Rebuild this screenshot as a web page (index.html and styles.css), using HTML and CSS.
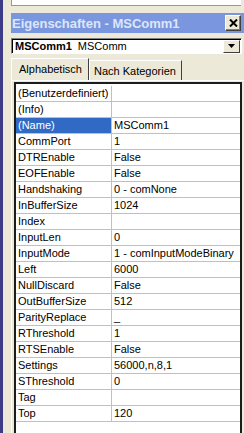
FILE: index.html
```html
<!DOCTYPE html>
<html lang="de">
<head>
    <meta charset="UTF-8">
    <meta name="viewport" content="width=device-width, initial-scale=1.0">
    <title>Eigenschaften - MSComm1</title>

    <link rel="stylesheet" href="styles.css">
</head>
<body>
    <div class="window">
        <div class="edge"></div>

        <div class="pane">
            <div class="top-box"></div>

            <div class="titlebar">
                <span class="title">Eigenschaften - MSComm1</span>
                <button type="button" class="close">
                    <svg width="9" height="8" viewBox="0 0 9 8">
                        <path d="M1 0.5 L8 7.5 M8 0.5 L1 7.5" stroke="#000" stroke-width="2" fill="none"/>
                    </svg>
                </button>
            </div>

            <div class="combo">
                <span class="combo-text"><b>MSComm1</b><span class="type">MSComm</span></span>
                <span class="combo-button">
                    <svg width="7" height="4" viewBox="0 0 7 4">
                        <path d="M0 0 H7 L3.5 4 Z" fill="#000"/>
                    </svg>
                </span>
            </div>

            <div class="tabs">
                <div class="tab active">Alphabetisch</div>
                <div class="tab">Nach Kategorien</div>
            </div>

            <div class="panel">
                <div class="grid">
                    <div class="row"><div class="name">(Benutzerdefiniert)</div><div class="value"></div></div>
                    <div class="row"><div class="name">(Info)</div><div class="value"></div></div>
                    <div class="row"><div class="name selected">(Name)</div><div class="value">MSComm1</div></div>
                    <div class="row"><div class="name">CommPort</div><div class="value">1</div></div>
                    <div class="row"><div class="name">DTREnable</div><div class="value">False</div></div>
                    <div class="row"><div class="name">EOFEnable</div><div class="value">False</div></div>
                    <div class="row"><div class="name">Handshaking</div><div class="value">0 - comNone</div></div>
                    <div class="row"><div class="name">InBufferSize</div><div class="value">1024</div></div>
                    <div class="row"><div class="name">Index</div><div class="value"></div></div>
                    <div class="row"><div class="name">InputLen</div><div class="value">0</div></div>
                    <div class="row"><div class="name">InputMode</div><div class="value">1 - comInputModeBinary</div></div>
                    <div class="row"><div class="name">Left</div><div class="value">6000</div></div>
                    <div class="row"><div class="name">NullDiscard</div><div class="value">False</div></div>
                    <div class="row"><div class="name">OutBufferSize</div><div class="value">512</div></div>
                    <div class="row"><div class="name">ParityReplace</div><div class="value">_</div></div>
                    <div class="row"><div class="name">RThreshold</div><div class="value">1</div></div>
                    <div class="row"><div class="name">RTSEnable</div><div class="value">False</div></div>
                    <div class="row"><div class="name">Settings</div><div class="value">56000,n,8,1</div></div>
                    <div class="row"><div class="name">SThreshold</div><div class="value">0</div></div>
                    <div class="row"><div class="name">Tag</div><div class="value"></div></div>
                    <div class="row"><div class="name">Top</div><div class="value">120</div></div>
                </div>
            </div>
        </div>
    </div>
</body>
</html>
```

FILE: styles.css
```css
body {
    margin: 0;

    font-family: 'Liberation Sans', Arial, sans-serif;
    font-size: 11px;
    color: #000;

    background-color: #ece9d8;

    overflow: hidden;
}

.window {
    height: 433px;

    display: flex;
}

.edge {
    width: 3px;

    background-color: #3b3b88;
}

.pane {
    flex: 1;
    min-width: 0;

    padding-left: 8px;

    display: flex;
    flex-direction: column;
}

.top-box {
    height: 5px;
    margin-right: 3px;
    margin-bottom: 7px;

    background-color: #fff;

    border-left: 1px solid #919b9c;
    border-bottom: 1px solid #919b9c;
}

.titlebar {
    height: 20px;

    background-color: #7a96df;

    display: flex;
    justify-content: space-between;
    align-items: center;
}

.titlebar .title {
    padding-left: 1px;

    color: #dce6fa;
    font-size: 13px;
    font-weight: bold;
}

.titlebar .close {
    width: 16px;
    height: 16px;
    margin-right: 3px;
    padding: 0;

    background-color: #ece9d8;

    border: 1px solid;
    border-color: #fff #404040 #404040 #fff;
    box-shadow: inset -1px -1px 0 #808080;

    display: flex;
    justify-content: center;
    align-items: center;
}

.combo {
    height: 12px;
    margin-top: 5px;
    margin-right: 2px;
    padding: 1px;

    background-color: #fff;

    border: 1px solid;
    border-color: #808080 #fff #fff #808080;
    box-shadow: inset 1px 1px 0 #000;

    display: flex;
    justify-content: space-between;
    align-items: center;
}

.combo .combo-text {
    padding-left: 2px;
}

.combo .type {
    margin-left: 6px;
}

.combo .combo-button {
    width: 17px;
    height: 13px;

    background-color: #ece9d8;

    border: 1px solid;
    border-color: #fff #404040 #404040 #fff;
    box-sizing: border-box;

    display: flex;
    justify-content: center;
    align-items: center;
}

.tabs {
    height: 22px;
    margin-top: 4px;

    display: flex;
    align-items: flex-end;
}

.tabs .tab {
    height: 19px;
    padding: 0 5px 0 4px;

    border: 1px solid;
    border-color: #fff #404040 transparent #fff;
    border-bottom: none;

    display: flex;
    align-items: center;
}

.tabs .active {
    height: 22px;
    padding: 0 6px 2px 7px;
    box-sizing: border-box;
}

.panel {
    flex: 1;
    min-height: 0;

    padding: 1px 2px 0 2px;

    border-left: 1px solid #fff;
    border-top: 1px solid #fff;

    overflow: hidden;
}

.grid {
    height: 100%;
    padding-top: 2px;

    background-color: #fff;

    border: 2px solid #1c1c1c;
    border-bottom: none;
}

.grid .row {
    height: 15px;

    border-bottom: 1px solid #c0c0c0;

    display: grid;
    grid-template-columns: 96px 1fr;
}

.grid .name {
    padding-left: 2px;
    line-height: 15px;

    border-right: 1px solid #c0c0c0;

    white-space: nowrap;
}

.grid .value {
    padding-left: 2px;
    line-height: 15px;

    white-space: nowrap;
}

.grid .selected {
    background-color: #316ac5;
    color: #fff;
}
```
